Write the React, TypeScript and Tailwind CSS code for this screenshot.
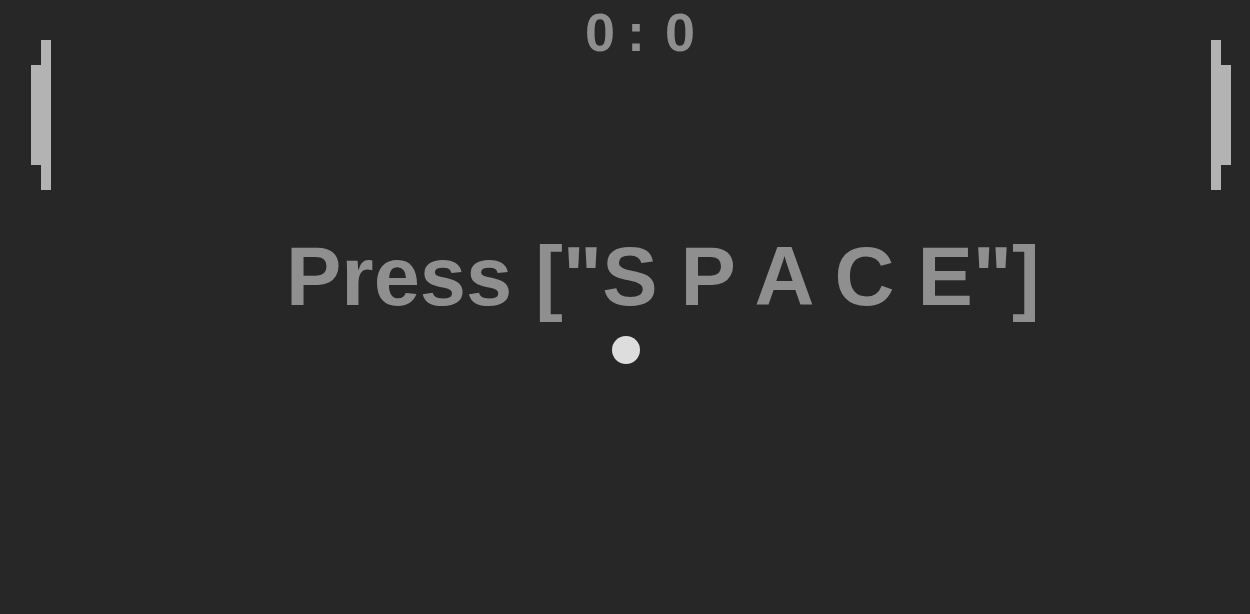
function Paddle({ side }: { side: 'left' | 'right' }) {
  const stem = <div className="w-[10px] h-[150px] bg-[#b3b3b3]" />;
  const grip = <div className="w-[10px] h-[100px] bg-[#b3b3b3]" />;
  return (
    <div className="flex items-center">
      {side === 'left' ? <>{grip}{stem}</> : <>{stem}{grip}</>}
    </div>
  );
}

export default function App() {
  return (
    <div className="relative w-[1250px] h-[614px] overflow-hidden bg-[#272727] font-['Liberation_Sans',Arial,sans-serif] flex flex-col">
      {/* score */}
      <div className="absolute inset-x-0 top-[2px] flex justify-center pl-[30px] text-[54px] leading-[60px] font-bold text-[#8f8f8f]">
        <span>0</span>
        <span className="ml-[12px]">:</span>
        <span className="ml-[20px]">0</span>
      </div>

      {/* paddles */}
      <div className="mt-[40px] flex justify-between pl-[31px] pr-[19px]">
        <Paddle side="left" />
        <Paddle side="right" />
      </div>

      {/* message */}
      <div className="mt-[37px] pl-[286px] whitespace-nowrap text-[83px] leading-[100px] font-bold text-[#8f8f8f]">
        Press ["S P A C E"]
      </div>

      {/* ball */}
      <div className="mt-[9px] flex justify-center pl-[2px]">
        <div className="w-[28px] h-[28px] rounded-full bg-[#dddddd]" />
      </div>
    </div>
  );
}
